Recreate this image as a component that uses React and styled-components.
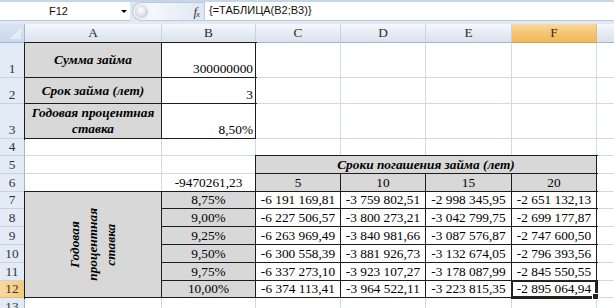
import React from 'react';
import styled, { createGlobalStyle, css } from 'styled-components';

const GlobalStyle = createGlobalStyle`
  html, body { margin: 0; padding: 0; background: #fff; }
  body { font-family: "Liberation Serif", "Times New Roman", serif; }
`;

const Window = styled.div`
  width: 614px;
  height: 308px;
  overflow: hidden;
  background: #fff;
`;

// formula bar
const FormulaBar = styled.div`
  box-sizing: border-box;
  height: 24px;
  padding-top: 2px;
  display: flex;
  align-items: flex-start;
  background: linear-gradient(#c6d6ea 0, #c6d6ea 2px, #dbe5f2 2px, #e3eaf4 100%);
`;

const NameBox = styled.div`
  box-sizing: border-box;
  width: 130px;
  height: 19px;
  display: flex;
  align-items: center;
  background: #fff;
  border-bottom: 1px solid #b7c8dd;
  font-family: "Liberation Sans", Arial, sans-serif;
  font-size: 11px;
  color: #111;
`;

const NameText = styled.span`
  flex: 1;
  text-align: center;
  padding-right: 4px;
`;

const DropArrow = styled.span`
  width: 0;
  height: 0;
  margin-right: 3px;
  border-left: 3px solid transparent;
  border-right: 3px solid transparent;
  border-top: 3px solid #000;
`;

const Splitter = styled.div`
  box-sizing: border-box;
  width: 72px;
  height: 19px;
  margin-left: 2px;
  display: flex;
  align-items: center;
  justify-content: space-between;
  padding: 0 5px 0 2px;
  border: 1px solid #b9c9de;
  border-right: none;
  border-radius: 10px 0 0 10px;
  background: linear-gradient(90deg, #e8edf3 0%, #f4f7fb 30%, #dfe7f2 100%);
`;

const Knob = styled.span`
  width: 13px;
  height: 13px;
  border-radius: 50%;
  background: radial-gradient(circle at 45% 40%, #ffffff 0, #e4e7eb 40%, #b6bcc4 100%);
`;

const Fx = styled.span`
  font-family: "Liberation Serif", "Times New Roman", serif;
  font-style: italic;
  font-size: 13px;
  color: #3a3a3a;
  letter-spacing: -1px;

  sub {
    font-size: 9px;
    vertical-align: -1px;
  }
`;

const FormulaInput = styled.div`
  box-sizing: border-box;
  flex: 1;
  height: 19px;
  padding: 2px 0 0 4px;
  background: #fff;
  border-left: 1px solid #b9c9de;
  border-bottom: 1px solid #b7c8dd;
  font-family: "Liberation Sans", Arial, sans-serif;
  font-size: 11px;
  color: #111;
`;

// sheet grid
const Sheet = styled.div`
  display: grid;
  grid-template-columns: 25px 137px 94px 85px 85px 86px 85px 85px;
  grid-template-rows: 19px 35px 26px 35px 17px 18px 18px 17px 18px 18px 18px 18px 17px 18px;
  font-size: 13.33px;
`;

const Corner = styled.div`
  position: relative;
  box-sizing: border-box;
  background: linear-gradient(#d9e4f2, #c9d8eb);
  border-right: 1px solid #9eb6ce;
  border-bottom: 1px solid #9eb6ce;

  &::after {
    content: "";
    position: absolute;
    right: 3px;
    bottom: 3px;
    width: 11px;
    height: 11px;
    clip-path: polygon(100% 0, 100% 100%, 0 100%);
    background: linear-gradient(135deg, #f6f9fc, #dfe7f1);
  }
`;

const ColHead = styled.div`
  box-sizing: border-box;
  display: flex;
  align-items: center;
  justify-content: center;
  color: #2c2c2c;
  border-right: 1px solid ${(p) => (p.$active ? '#f0b862' : '#c7d3e2')};
  border-bottom: 1px solid ${(p) => (p.$active ? '#e79e3a' : '#9eb6ce')};
  background: ${(p) =>
    p.$active
      ? 'linear-gradient(#f9d9a2, #f6c573 50%, #f3b85a)'
      : 'linear-gradient(#f6f8fb, #e6ecf4 50%, #dbe3ee)'};
`;

const RowHead = styled.div`
  box-sizing: border-box;
  display: flex;
  align-items: flex-end;
  justify-content: center;
  line-height: 16px;
  color: #333;
  border-right: 1px solid ${(p) => (p.$active ? '#e79e3a' : '#9eb6ce')};
  border-bottom: 1px solid ${(p) => (p.$active ? '#f0b862' : '#c5d3e4')};
  background: ${(p) => (p.$active ? 'linear-gradient(90deg, #f9d9a2, #f6c97c)' : '#e3ebf6')};
`;

const Cell = styled.div`
  position: relative;
  box-sizing: border-box;
  display: flex;
  align-items: ${(p) => (p.$v === 'center' ? 'center' : 'flex-end')};
  justify-content: ${(p) => (p.$h === 'right' ? 'flex-end' : 'center')};
  grid-column: span ${(p) => p.$cols || 1};
  grid-row: span ${(p) => p.$rows || 1};
  padding: 0 2px;
  line-height: 16px;
  text-align: center;
  white-space: ${(p) => (p.$wrap ? 'normal' : 'nowrap')};
  color: #000;
  background: ${(p) => (p.$gray ? '#d8d8d8' : '#fff')};
  border-right: 1px solid #d0d7e5;
  border-bottom: 1px solid #d0d7e5;

  ${(p) =>
    p.$boxed &&
    css`
      border-color: #1c1c1c;
      box-shadow: 0 0 0 1px #1c1c1c;
    `}

  ${(p) =>
    p.$title &&
    css`
      font-weight: bold;
      font-style: italic;
    `}

  ${(p) =>
    p.$selected &&
    css`
      z-index: 1;
    `}
`;

const Vertical = styled.div`
  writing-mode: vertical-rl;
  transform: rotate(180deg);
  line-height: 18px;
  text-align: center;
`;

const Selection = styled.div`
  position: absolute;
  top: -1px;
  left: -1px;
  right: -1px;
  bottom: -1px;
  border: 2px solid #222;
  pointer-events: none;
`;

const FillHandle = styled.div`
  position: absolute;
  right: -4px;
  bottom: -4px;
  width: 5px;
  height: 5px;
  background: #222;
  border: 1px solid #fff;
`;

// G lies mostly beyond the window edge, so its letter is never seen
const COLUMNS = ['A', 'B', 'C', 'D', 'E', 'F', ''];
const TERMS = ['5', '10', '15', '20'];

const RATES = ['8,75%', '9,00%', '9,25%', '9,50%', '9,75%', '10,00%'];

const VALUES = [
  ['-6 191 169,81', '-3 759 802,51', '-2 998 345,95', '-2 651 132,13'],
  ['-6 227 506,57', '-3 800 273,21', '-3 042 799,75', '-2 699 177,87'],
  ['-6 263 969,49', '-3 840 981,66', '-3 087 576,87', '-2 747 600,50'],
  ['-6 300 558,39', '-3 881 926,73', '-3 132 674,05', '-2 796 393,56'],
  ['-6 337 273,10', '-3 923 107,27', '-3 178 087,99', '-2 845 550,55'],
  ['-6 374 113,41', '-3 964 522,11', '-3 223 815,35', '-2 895 064,94'],
];

const Blank = ({ n }) =>
  Array.from({ length: n }, (_, i) => <Cell key={i} />);

const App = () => {
  return (
    <Window>
      <GlobalStyle />
      <FormulaBar>
        <NameBox>
          <NameText>F12</NameText>
          <DropArrow />
        </NameBox>
        <Splitter>
          <Knob />
          <Fx>
            f<sub>x</sub>
          </Fx>
        </Splitter>
        <FormulaInput>{'{=ТАБЛИЦА(B2;B3)}'}</FormulaInput>
      </FormulaBar>

      <Sheet>
        <Corner />
        {COLUMNS.map((c, i) => (
          <ColHead key={i} $active={c === 'F'}>
            {c}
          </ColHead>
        ))}

        <RowHead>1</RowHead>
        <Cell $gray $boxed $title $v="center">Сумма займа</Cell>
        <Cell $boxed $h="right">300000000</Cell>
        <Blank n={5} />

        <RowHead>2</RowHead>
        <Cell $gray $boxed $title $v="center">Срок займа (лет)</Cell>
        <Cell $boxed $h="right">3</Cell>
        <Blank n={5} />

        <RowHead>3</RowHead>
        <Cell $gray $boxed $title $wrap $v="center">Годовая процентная ставка</Cell>
        <Cell $boxed $h="right">8,50%</Cell>
        <Blank n={5} />

        <RowHead>4</RowHead>
        <Blank n={7} />

        <RowHead>5</RowHead>
        <Blank n={2} />
        <Cell $gray $boxed $title $cols={4}>Сроки погашения займа (лет)</Cell>
        <Cell />

        <RowHead>6</RowHead>
        <Cell />
        <Cell>-9470261,23</Cell>
        {TERMS.map((t) => (
          <Cell key={t} $gray $boxed>
            {t}
          </Cell>
        ))}
        <Cell />

        {RATES.map((rate, r) => (
          <React.Fragment key={rate}>
            <RowHead $active={r === 5}>{7 + r}</RowHead>
            {r === 0 && (
              <Cell $gray $boxed $title $rows={6} $v="center">
                <Vertical>
                  Годовая
                  <br />
                  процентная
                  <br />
                  ставка
                </Vertical>
              </Cell>
            )}
            <Cell $gray $boxed>{rate}</Cell>
            {VALUES[r].map((v, c) => {
              const selected = r === 5 && c === 3;
              return (
                <Cell key={c} $boxed $selected={selected}>
                  {v}
                  {selected && (
                    <Selection>
                      <FillHandle />
                    </Selection>
                  )}
                </Cell>
              );
            })}
            <Cell />
          </React.Fragment>
        ))}

        <RowHead>13</RowHead>
        <Blank n={7} />
      </Sheet>
    </Window>
  );
};

export default App;
